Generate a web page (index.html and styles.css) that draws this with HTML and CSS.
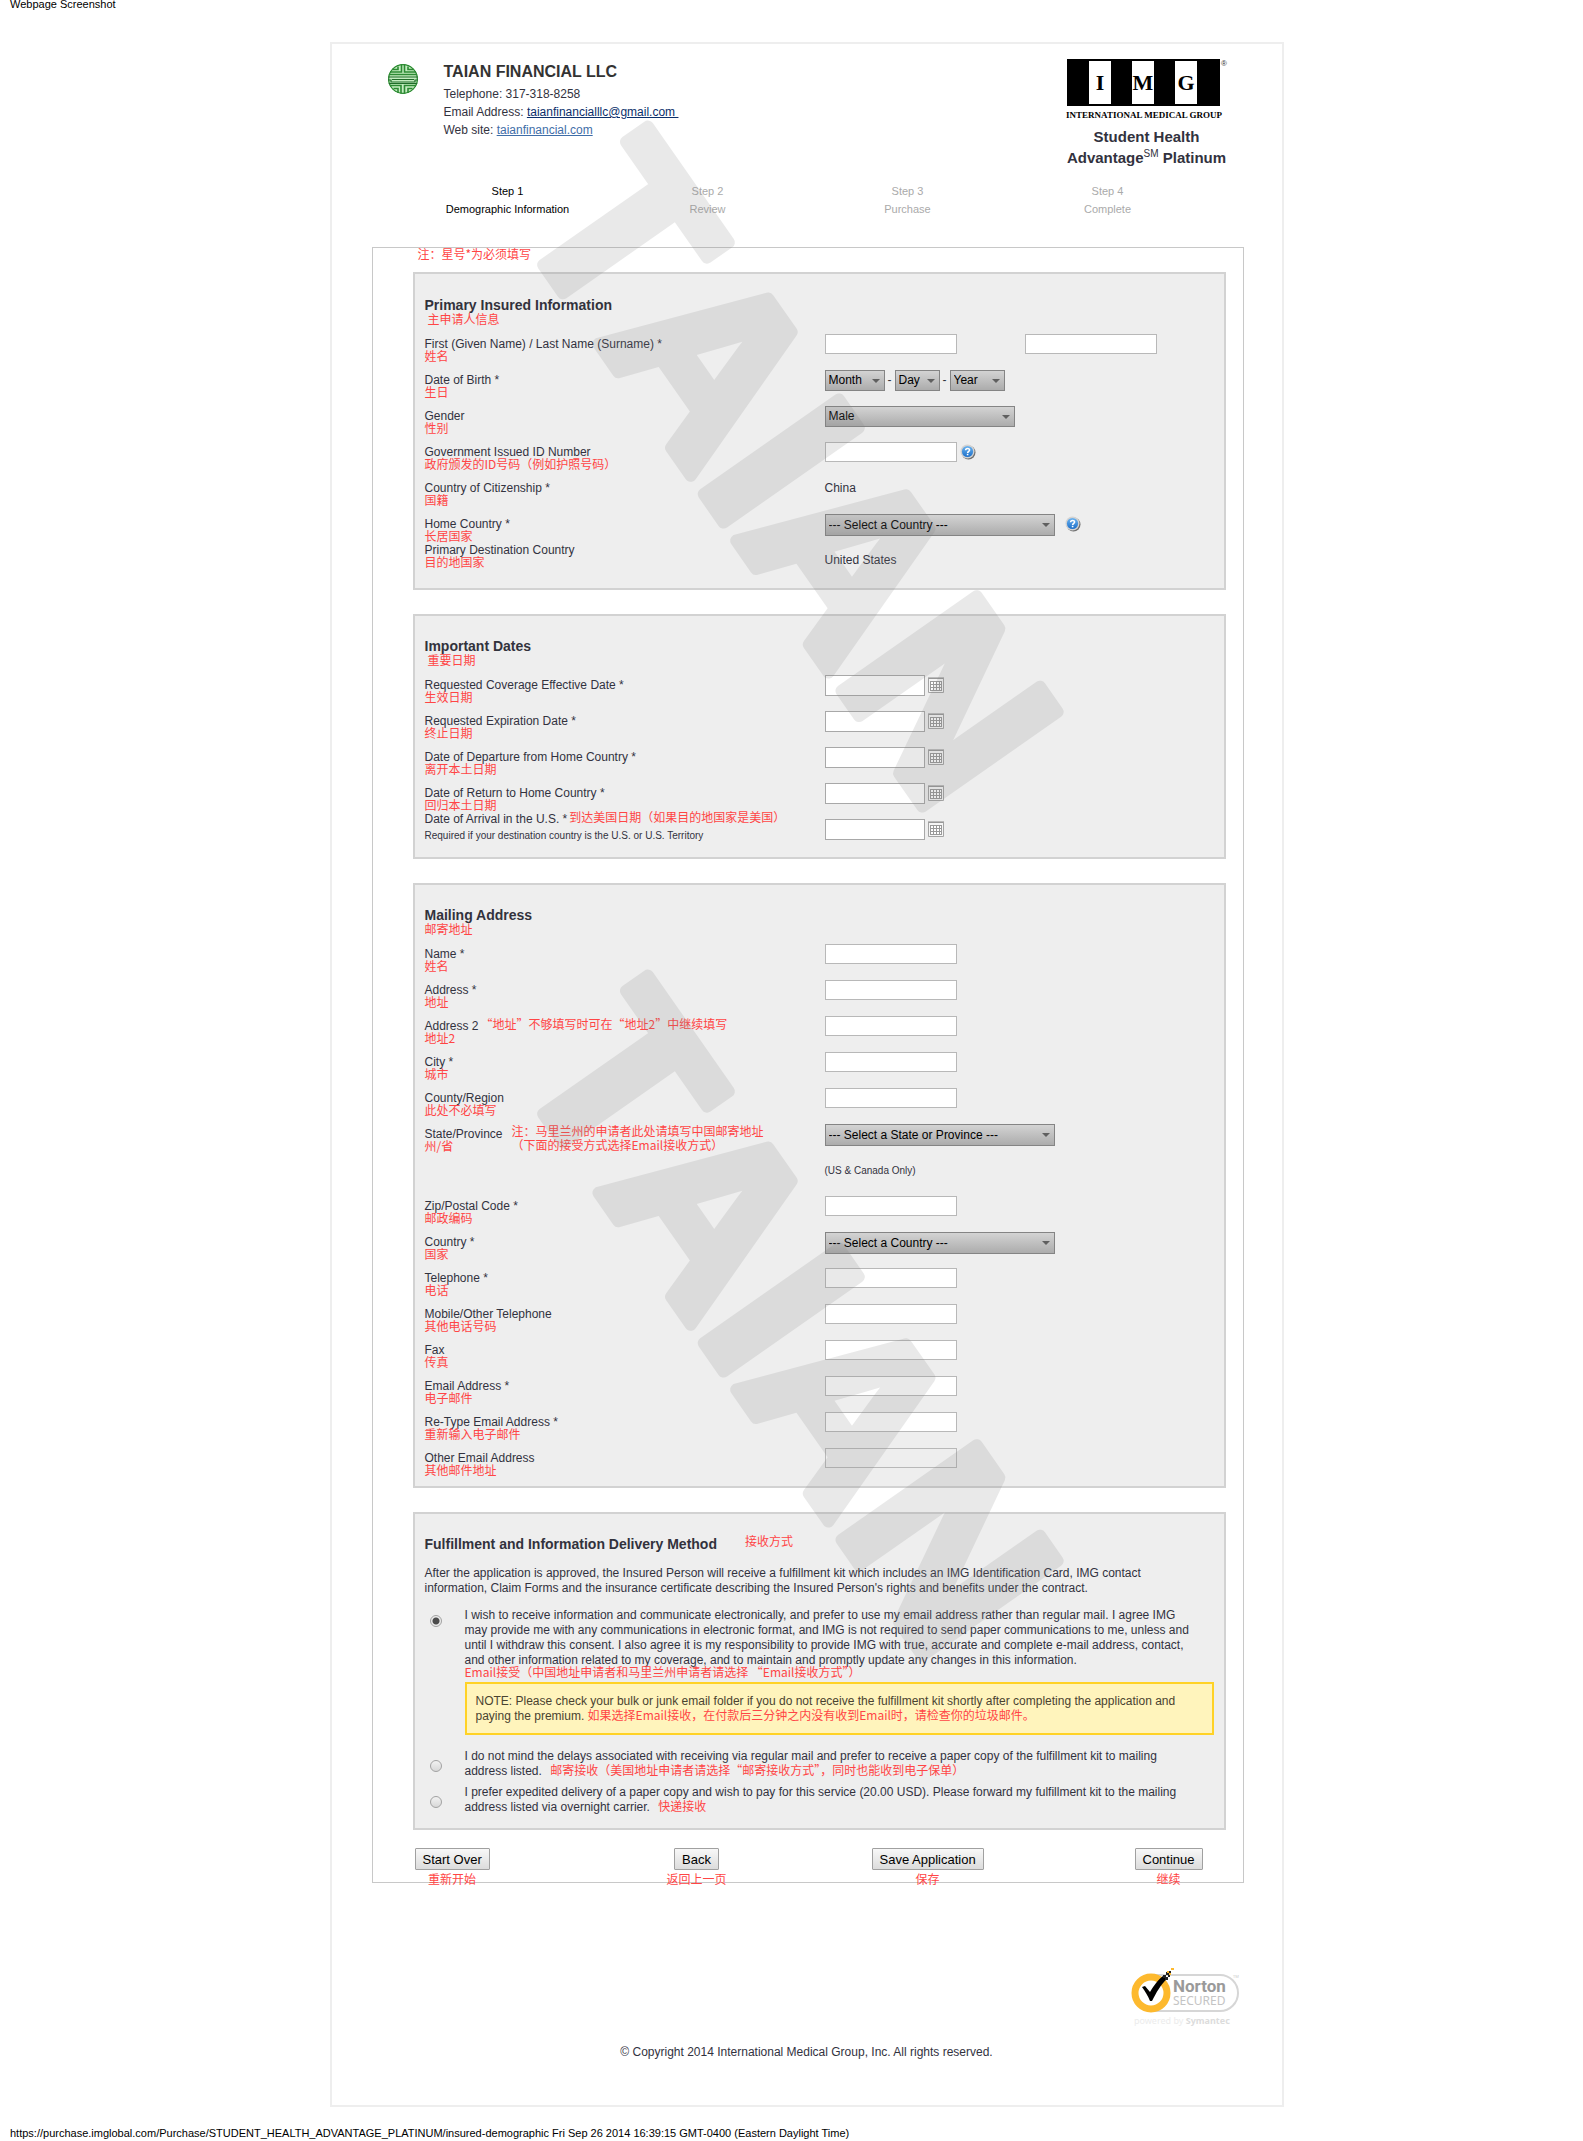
FILE: index.html
```html
<!DOCTYPE html>
<html lang="en">
<head>
<meta charset="utf-8">
<title>Student Health Advantage Platinum</title>
<link rel="stylesheet" href="styles.css">
</head>
<body>
<p class="print-line print-top">Webpage Screenshot</p>
<div class="page">
  <header class="header">
    <svg class="agent-logo" width="32" height="32" viewBox="0 0 32 32" role="img" aria-label="Taian Financial">
      <clipPath id="disc"><circle cx="16" cy="16" r="15"/></clipPath>
      <g clip-path="url(#disc)">
        <rect width="32" height="32" fill="#c4edc0"/>
        <g fill="none" stroke="#2c8a33" stroke-width="1.600">
          <circle cx="16" cy="16" r="14.500"/>
          <path d="M14.500 1v8H3M17.500 1v8h12M11 3.500v3H5.500M21 3.500v3h5.500"/>
          <path d="M1 11.500h30M3 22.500h11v9M29 22.500H17.500v9M6.500 25.500h4.500v5M25.500 25.500H21v5"/>
        </g>
        <path d="M0 14h32M0 17h4v2h24v-2H32M5 16.500h22M1 20.500h30" fill="none" stroke="#1f6d28" stroke-width="1.200"/>
      </g>
    </svg>
    <div class="agent">
      <h1>TAIAN FINANCIAL LLC</h1>
      <p>Telephone: 317-318-8258</p>
      <p>Email Address: <a class="mail" href="mailto:taianfinancialllc@gmail.com">taianfinancialllc@gmail.com&nbsp;</a></p>
      <p>Web site: <a class="site" href="#">taianfinancial.com</a></p>
    </div>
    <div class="brand">
      <svg width="162" height="62" viewBox="0 0 162 62" role="img" aria-label="International Medical Group">
        <rect x="0" y="0" width="153" height="47" fill="#000"/>
        <g fill="#fff"><rect x="22" y="2" width="22" height="43"/><rect x="65" y="2" width="22" height="43"/><rect x="108" y="2" width="22" height="43"/></g>
        <g class="img-letters"><text x="33" y="31">I</text><text x="76" y="31">M</text><text x="119" y="31">G</text></g>
        <text class="img-name" x="77" y="59">INTERNATIONAL MEDICAL GROUP</text>
        <text class="img-reg" x="157" y="7">®</text>
      </svg>
      <p class="product">Student Health<br>Advantage<sup>SM</sup> Platinum</p>
    </div>
  </header>

  <ol class="steps">
    <li class="current">Step 1<br>Demographic Information</li>
    <li>Step 2<br>Review</li>
    <li>Step 3<br>Purchase</li>
    <li>Step 4<br>Complete</li>
  </ol>

  <form class="application">
    <p class="cn lead" lang="zh-CN">注：星号*为必须填写</p>

    <section class="panel">
      <h2>Primary Insured Information</h2>
      <p class="cn title-cn" lang="zh-CN">主申请人信息</p>
      <div class="row"><div class="label"><label for="first">First (Given Name) / Last Name (Surname) *</label><span class="cn" lang="zh-CN">姓名</span></div>
        <div class="field names"><input id="first" type="text"><input type="text" aria-label="Last Name"></div></div>
      <div class="row"><div class="label"><label for="month">Date of Birth *</label><span class="cn" lang="zh-CN">生日</span></div>
        <div class="field"><span class="select month"><select id="month"><option>Month</option></select></span><span class="dash">-</span><span class="select day"><select aria-label="Day"><option>Day</option></select></span><span class="dash">-</span><span class="select year"><select aria-label="Year"><option>Year</option></select></span></div></div>
      <div class="row"><div class="label"><label for="gender">Gender</label><span class="cn" lang="zh-CN">性别</span></div>
        <div class="field"><span class="select gender"><select id="gender"><option>Male</option></select></span></div></div>
      <div class="row"><div class="label"><label for="gov">Government Issued ID Number</label><span class="cn" lang="zh-CN">政府颁发的ID号码（例如护照号码）</span></div>
        <div class="field near"><input id="gov" type="text"><svg class="help" width="16" height="16" viewBox="0 0 16 16"><use href="#help"/></svg></div></div>
      <div class="row"><div class="label"><span>Country of Citizenship *</span><span class="cn" lang="zh-CN">国籍</span></div>
        <div class="field">China</div></div>
      <div class="row"><div class="label"><label for="home">Home Country *</label><span class="cn" lang="zh-CN">长居国家</span></div>
        <div class="field apart"><span class="select wide"><select id="home"><option>--- Select a Country ---</option></select></span><svg class="help" width="16" height="16" viewBox="0 0 16 16"><use href="#help"/></svg></div></div>
      <div class="row raised"><div class="label"><span>Primary Destination Country</span><span class="cn" lang="zh-CN">目的地国家</span></div>
        <div class="field">United States</div></div>
    </section>

    <section class="panel">
      <h2>Important Dates</h2>
      <p class="cn title-cn" lang="zh-CN">重要日期</p>
      <div class="row"><div class="label"><label for="d1">Requested Coverage Effective Date *</label><span class="cn" lang="zh-CN">生效日期</span></div>
        <div class="field near"><input class="date" id="d1" type="text"><svg width="16" height="16" viewBox="0 0 16 16"><use href="#cal"/></svg></div></div>
      <div class="row"><div class="label"><label for="d2">Requested Expiration Date *</label><span class="cn" lang="zh-CN">终止日期</span></div>
        <div class="field near"><input class="date" id="d2" type="text"><svg width="16" height="16" viewBox="0 0 16 16"><use href="#cal"/></svg></div></div>
      <div class="row"><div class="label"><label for="d3">Date of Departure from Home Country *</label><span class="cn" lang="zh-CN">离开本土日期</span></div>
        <div class="field near"><input class="date" id="d3" type="text"><svg width="16" height="16" viewBox="0 0 16 16"><use href="#cal"/></svg></div></div>
      <div class="row"><div class="label"><label for="d4">Date of Return to Home Country *</label><span class="cn" lang="zh-CN">回归本土日期</span></div>
        <div class="field near"><input class="date" id="d4" type="text"><svg width="16" height="16" viewBox="0 0 16 16"><use href="#cal"/></svg></div></div>
      <div class="row raised"><div class="label"><div class="beside"><label for="d5">Date of Arrival in the U.S. *</label><span class="cn" lang="zh-CN">到达美国日期（如果目的地国家是美国）</span></div><small>Required if your destination country is the U.S. or U.S. Territory</small></div>
        <div class="field near"><input class="date" id="d5" type="text"><svg width="16" height="16" viewBox="0 0 16 16"><use href="#cal"/></svg></div></div>
    </section>

    <section class="panel">
      <h2>Mailing Address</h2>
      <p class="cn title-cn flush" lang="zh-CN">邮寄地址</p>
      <div class="row"><div class="label"><label for="m1">Name *</label><span class="cn" lang="zh-CN">姓名</span></div><div class="field"><input id="m1" type="text"></div></div>
      <div class="row"><div class="label"><label for="m2">Address *</label><span class="cn" lang="zh-CN">地址</span></div><div class="field"><input id="m2" type="text"></div></div>
      <div class="row"><div class="label"><div class="beside"><label for="m3">Address 2</label><span class="cn" lang="zh-CN">“地址”不够填写时可在“地址2”中继续填写</span></div><span class="cn" lang="zh-CN">地址2</span></div><div class="field"><input id="m3" type="text"></div></div>
      <div class="row"><div class="label"><label for="m4">City *</label><span class="cn" lang="zh-CN">城市</span></div><div class="field"><input id="m4" type="text"></div></div>
      <div class="row"><div class="label"><label for="m5">County/Region</label><span class="cn" lang="zh-CN">此处不必填写</span></div><div class="field"><input id="m5" type="text"></div></div>
      <div class="row"><div class="pair"><div class="label"><label for="m6">State/Province</label><span class="cn" lang="zh-CN">州/省</span></div><p class="cn state-note" lang="zh-CN">注：马里兰州的申请者此处请填写中国邮寄地址<br>（下面的接受方式选择Email接收方式）</p></div><div class="field"><span class="select wide"><select id="m6"><option>--- Select a State or Province ---</option></select></span></div></div>
      <div class="row"><div></div><div class="field"><small>(US &amp; Canada Only)</small></div></div>
      <div class="row"><div class="label"><label for="m7">Zip/Postal Code *</label><span class="cn" lang="zh-CN">邮政编码</span></div><div class="field"><input id="m7" type="text"></div></div>
      <div class="row"><div class="label"><label for="m8">Country *</label><span class="cn" lang="zh-CN">国家</span></div><div class="field"><span class="select wide"><select id="m8"><option>--- Select a Country ---</option></select></span></div></div>
      <div class="row"><div class="label"><label for="m9">Telephone *</label><span class="cn" lang="zh-CN">电话</span></div><div class="field"><input id="m9" type="text"></div></div>
      <div class="row"><div class="label"><label for="m10">Mobile/Other Telephone</label><span class="cn" lang="zh-CN">其他电话号码</span></div><div class="field"><input id="m10" type="text"></div></div>
      <div class="row"><div class="label"><label for="m11">Fax</label><span class="cn" lang="zh-CN">传真</span></div><div class="field"><input id="m11" type="text"></div></div>
      <div class="row"><div class="label"><label for="m12">Email Address *</label><span class="cn" lang="zh-CN">电子邮件</span></div><div class="field"><input id="m12" type="text"></div></div>
      <div class="row"><div class="label"><label for="m13">Re-Type Email Address *</label><span class="cn" lang="zh-CN">重新输入电子邮件</span></div><div class="field"><input id="m13" type="text"></div></div>
      <div class="row"><div class="label"><label for="m14">Other Email Address</label><span class="cn" lang="zh-CN">其他邮件地址</span></div><div class="field"><input class="quiet" id="m14" type="text"></div></div>
    </section>

    <section class="panel delivery">
      <div class="delivery-title"><h2>Fulfillment and Information Delivery Method</h2><span class="cn" lang="zh-CN">接收方式</span></div>
      <p class="intro">After the application is approved, the Insured Person will receive a fulfillment kit which includes an IMG Identification Card, IMG contact<br>information, Claim Forms and the insurance certificate describing the Insured Person's rights and benefits under the contract.</p>
      <div class="option first">
        <input type="radio" name="delivery" id="o1" checked>
        <div><label for="o1">I wish to receive information and communicate electronically, and prefer to use my email address rather than regular mail. I agree IMG<br>may provide me with any communications in electronic format, and IMG is not required to send paper communications to me, unless and<br>until I withdraw this consent. I also agree it is my responsibility to provide IMG with true, accurate and complete e-mail address, contact,<br>and other information related to my coverage, and to maintain and promptly update any changes in this information.</label>
          <p class="cn choice-note" lang="zh-CN">Email接受（中国地址申请者和马里兰州申请者请选择 “Email接收方式”）</p>
          <p class="notice">NOTE: Please check your bulk or junk email folder if you do not receive the fulfillment kit shortly after completing the application and<br>paying the premium. <span class="cn" lang="zh-CN">如果选择Email接收，在付款后三分钟之内没有收到Email时，请检查你的垃圾邮件。</span></p>
        </div>
      </div>
      <div class="option">
        <input type="radio" name="delivery" id="o2">
        <label for="o2">I do not mind the delays associated with receiving via regular mail and prefer to receive a paper copy of the fulfillment kit to mailing<br>address listed. <span class="cn" lang="zh-CN">邮寄接收（美国地址申请者请选择“邮寄接收方式”，同时也能收到电子保单）</span></label>
      </div>
      <div class="option">
        <input type="radio" name="delivery" id="o3">
        <label for="o3">I prefer expedited delivery of a paper copy and wish to pay for this service (20.00 USD). Please forward my fulfillment kit to the mailing<br>address listed via overnight carrier. <span class="cn" lang="zh-CN">快递接收</span></label>
      </div>
    </section>

    <div class="actions">
      <div><button type="button">Start Over</button><span class="cn" lang="zh-CN">重新开始</span></div>
      <div><button type="button">Back</button><span class="cn" lang="zh-CN">返回上一页</span></div>
      <div><button type="button">Save Application</button><span class="cn" lang="zh-CN">保存</span></div>
      <div><button type="button">Continue</button><span class="cn" lang="zh-CN">继续</span></div>
    </div>
  </form>

  <footer class="footer">
    <svg class="norton" width="112" height="62" viewBox="0 0 112 62" role="img" aria-label="Norton Secured, powered by Symantec">
      <path d="M20 9h70a18 18 0 0 1 0 36H20z" fill="#fff" stroke="#d6d6d6" stroke-width="2"/>
      <circle cx="21" cy="27" r="16" fill="#fff" stroke="#fdb92e" stroke-width="7"/>
      <path d="M12 21l3-1 5 6C24 19 29 13 33 10l4 3C31 18 26 27 22 35h-2C18 30 15 25 12 21z" fill="#000"/>
      <path d="M33 9h3v3h-3zM36 6h3v3h-3zM35 11h3v3h-3zM39 5h2v2h-2zM38 9h2v2h-2z" fill="#222"/>
      <path d="M37 5h2v2h-2zM41 2h3v2h-3zM39 7h2v2h-2z" fill="#fdb92e"/>
      <text class="n1" x="43" y="26">Norton</text>
      <text class="n2" x="43" y="39">SECURED</text>
      <text class="n4" x="103" y="12">TM</text>
      <text class="n3" x="4" y="58">powered by <tspan class="n3b">Symantec</tspan></text>
    </svg>
    <p class="copyright">© Copyright 2014 International Medical Group, Inc. All rights reserved.</p>
  </footer>

  <svg class="watermark" width="950" height="1700" aria-hidden="true">
    <text transform="translate(179 175) rotate(55)">TAIAN</text>
    <text transform="translate(179 1024) rotate(55)">TAIAN</text>
  </svg>
</div>
<p class="print-line print-bottom">https://purchase.imglobal.com/Purchase/STUDENT_HEALTH_ADVANTAGE_PLATINUM/insured-demographic Fri Sep 26 2014 16:39:15 GMT-0400 (Eastern Daylight Time)</p>

<svg class="defs" width="0" height="0" aria-hidden="true">
  <defs>
    <linearGradient id="blue" x1="0" y1="0" x2="0" y2="1"><stop offset="0" stop-color="#6db4f0"/><stop offset="1" stop-color="#1c6fc9"/></linearGradient>
  </defs>
  <symbol id="help" viewBox="0 0 16 16">
    <circle cx="8.500" cy="8.500" r="7" fill="#6f6f6f"/>
    <circle cx="7.500" cy="7.500" r="7" fill="#d3d3d3"/>
    <circle cx="7.500" cy="7.500" r="5.600" fill="url(#blue)"/>
    <path d="M5.600 6.300c0-2.400 4-2.400 4-.2 0 1.500-2 1.300-2 2.800" fill="none" stroke="#fff" stroke-width="1.500"/>
    <rect x="6.800" y="9.800" width="1.600" height="1.500" fill="#fff"/>
  </symbol>
  <symbol id="cal" viewBox="0 0 16 16">
    <path d="M.5 1.500h15v14H.5z" fill="#f6f6f6" stroke="#a4a4a4"/>
    <path d="M0 1h16" stroke="#8a8a8a" stroke-width="1"/>
    <path d="M2 4h12v10H2z" fill="#999"/>
    <path d="M3 5h2v2H3zM6 5h2v2H6zM9 5h2v2H9zM12 5h1v2h-1zM3 8h2v2H3zM6 8h2v2H6zM9 8h2v2H9zM12 8h1v2h-1zM3 11h2v2H3zM6 11h2v2H6zM9 11h2v2H9zM12 11h1v2h-1z" fill="#fff"/>
  </symbol>
</svg>
</body>
</html>
```

FILE: styles.css
```css
* { box-sizing: border-box; }
body {
  margin: 0;
  background: #fff;
  color: #32323e;
  font: 12px/15px "Liberation Sans", Arial, "Noto Sans CJK SC", sans-serif;
}
h1, h2, p, ol { margin: 0; padding: 0; }
.cn {
  color: #ff4545;
  font-family: "Noto Sans CJK SC", sans-serif;
  font-size: 12px;
  font-weight: 400;
  white-space: nowrap;
}
small { font-size: 10px; }
.defs { position: absolute; }

.print-line { color: #000; font-size: 11px; padding-left: 10px; }
.print-top { height: 42px; line-height: 8px; }
.print-bottom { padding-top: 20px; line-height: 12px; }

.page {
  position: relative;
  width: 954px;
  max-width: 100%;
  margin: 0 auto;
  left: 15px;
  border: 2px solid #eee;
}

/* Header */
.header {
  display: flex;
  align-items: flex-start;
  padding: 15px 55px 0 55px;
  height: 138px;
}
.agent-logo { margin-top: 4px; }
.agent { flex: 1; padding-left: 25px; line-height: 18px; }
.agent h1 { font-size: 16px; line-height: 26px; color: #333; }
.agent .mail { color: #0b2f6b; }
.agent .site { color: #3f6ea8; }
.brand { width: 160px; }
.brand svg { display: block; overflow: visible; }
.img-letters text { font: bold 22px "Liberation Serif", serif; text-anchor: middle; fill: #000; }
.img-name { font: bold 9px "Liberation Serif", serif; text-anchor: middle; fill: #000; }
.img-reg { font: 8px "Liberation Sans", sans-serif; text-anchor: middle; fill: #333; }
.product { margin-top: 5px; font-size: 15px; line-height: 21px; font-weight: 700; text-align: center; white-space: nowrap; }
.product sup { font-size: 10px; line-height: 0; font-weight: 400; }

.steps {
  display: grid;
  grid-template-columns: repeat(4, 1fr);
  list-style: none;
  padding: 0 74px 0 76px;
  font-size: 11px;
  line-height: 18px;
  text-align: center;
  color: #aaa;
}
.steps .current { color: #000; }

/* Form */
.application {
  margin: 29px 38px 0 40px;
  padding: 0 17px 0 40px;
  border: 1px solid #c8c8c8;
}
.lead { padding-left: 5px; line-height: 12px; margin-bottom: 12px; }
.panel {
  background: #eee;
  border: 2px solid #d2d2d2;
  padding: 23px 10px 10px;
  margin-bottom: 24px;
}
.panel + .panel { padding-top: 22px; }
.panel h2 { font-size: 14px; line-height: 16px; color: #32323c; }
.title-cn { line-height: 11px; margin-bottom: 2px; padding-left: 3px; }
.title-cn.flush { padding-left: 0; }
.row { display: grid; grid-template-columns: 400px 1fr; min-height: 36px; }
.label { display: flex; flex-direction: column; justify-content: flex-end; align-items: flex-start; line-height: 14px; padding-bottom: 2px; }
.label > .cn { line-height: 9px; }
.raised .label { justify-content: flex-start; padding: 1px 0 0; }
.raised small { line-height: 20px; }
.beside { display: flex; gap: 2px; }
.beside .cn { line-height: 10px; }
.pair { display: flex; gap: 9px; align-items: flex-end; }
.state-note { line-height: 14px; }
.field { display: flex; align-items: center; }
.near { gap: 3px; }
.apart { gap: 10px; }
.names { gap: 68px; }
input[type="text"] {
  width: 132px;
  height: 20px;
  margin: 0;
  padding: 0 3px;
  border: 1px solid #b8b8b8;
  border-radius: 0;
  background: #fff;
  font: inherit;
}
input[type="text"].date { width: 100px; height: 21px; border-color: #a8a8a8; }
input[type="text"].quiet { background: #eee; }
.select { position: relative; display: inline-flex; }
.select::after {
  content: "";
  position: absolute;
  right: 5px;
  top: 9px;
  border: 4px solid transparent;
  border-top-color: #5f5f5f;
  border-bottom: 0;
  pointer-events: none;
}
select {
  appearance: none;
  width: 100%;
  height: 21px;
  margin: 0;
  padding: 0 3px;
  border: 1px solid #848484;
  border-radius: 0;
  background: linear-gradient(#d3d3d3, #acacac);
  color: #000;
  font: inherit;
}
.month { width: 60px; }
.day { width: 45px; }
.year { width: 55px; }
.gender { width: 190px; }
.wide { width: 230px; margin-top: 2px; }
.wide select { height: 22px; }
.dash { width: 10px; text-align: center; }

/* Delivery options */
.panel.delivery { margin-bottom: 18px; padding-bottom: 13px; }
.delivery-title { display: flex; gap: 28px; }
.delivery-title .cn { line-height: 9px; }
.intro { margin: 14px 0 12px; white-space: nowrap; }
.option { display: grid; grid-template-columns: 40px 1fr; white-space: nowrap; margin-top: 6px; }
.option .cn { line-height: 12px; }
.option label .cn { margin-left: 5px; }
.option .choice-note { margin-top: -2px; }
.option input {
  appearance: none;
  width: 12px;
  height: 12px;
  margin: 11px 0 0 5px;
  border: 1px solid #a2a2a2;
  border-radius: 50%;
  background: linear-gradient(#f2f2f2, #d8d8d8);
}
.option.first input { margin-top: 7px; }
.option input:checked { background: radial-gradient(circle, #4c4c4c 0 3px, #ececec 4px); }
.option label { display: block; }
.notice {
  margin: 4px 0 8px;
  padding: 10px 9px 9px;
  border: 2px solid #ffd226;
  background: #fff4bc;
  color: #4a4330;
  line-height: 15px;
}

.actions {
  display: grid;
  grid-template-columns: 252fr 205fr 263fr 69fr;
  padding: 0 22px 0 2px;
  margin-bottom: -4px;
}
.actions div { display: flex; flex-direction: column; align-items: center; justify-self: start; gap: 2px; }
.actions .cn { line-height: 14px; }
button {
  height: 22px;
  padding: 0 7px;
  border: 1px solid #a0a0a0;
  border-radius: 1px;
  background: linear-gradient(#f8f8f8, #dcdcdc);
  color: #000;
  font: 13px "Liberation Sans", Arial, sans-serif;
  white-space: nowrap;
}

.footer { padding: 83px 40px 45px 0; display: flex; flex-direction: column; }
.norton { align-self: flex-end; }
.norton text { font-family: "Noto Sans", sans-serif; }
.norton .n1 { font: bold 17px Roboto, sans-serif; fill: #9a9a9a; }
.norton .n2 { font-size: 12px; fill: #c4c4c4; }
.norton .n3 { font-size: 9px; fill: #ececec; }
.norton .n3b { fill: #dcdcdc; font-weight: 700; }
.norton .n4 { font-size: 4px; fill: #ccc; }
.copyright { margin-top: 17px; padding-left: 40px; text-align: center; }

.watermark { position: absolute; left: 0; top: 0; opacity: .17; pointer-events: none; }
.watermark text {
  font: bold 240px "Liberation Sans", Arial, sans-serif;
  font-kerning: none;
  fill: #808080;
  stroke: #808080;
  stroke-width: 12px;
  stroke-linejoin: round;
}
```
